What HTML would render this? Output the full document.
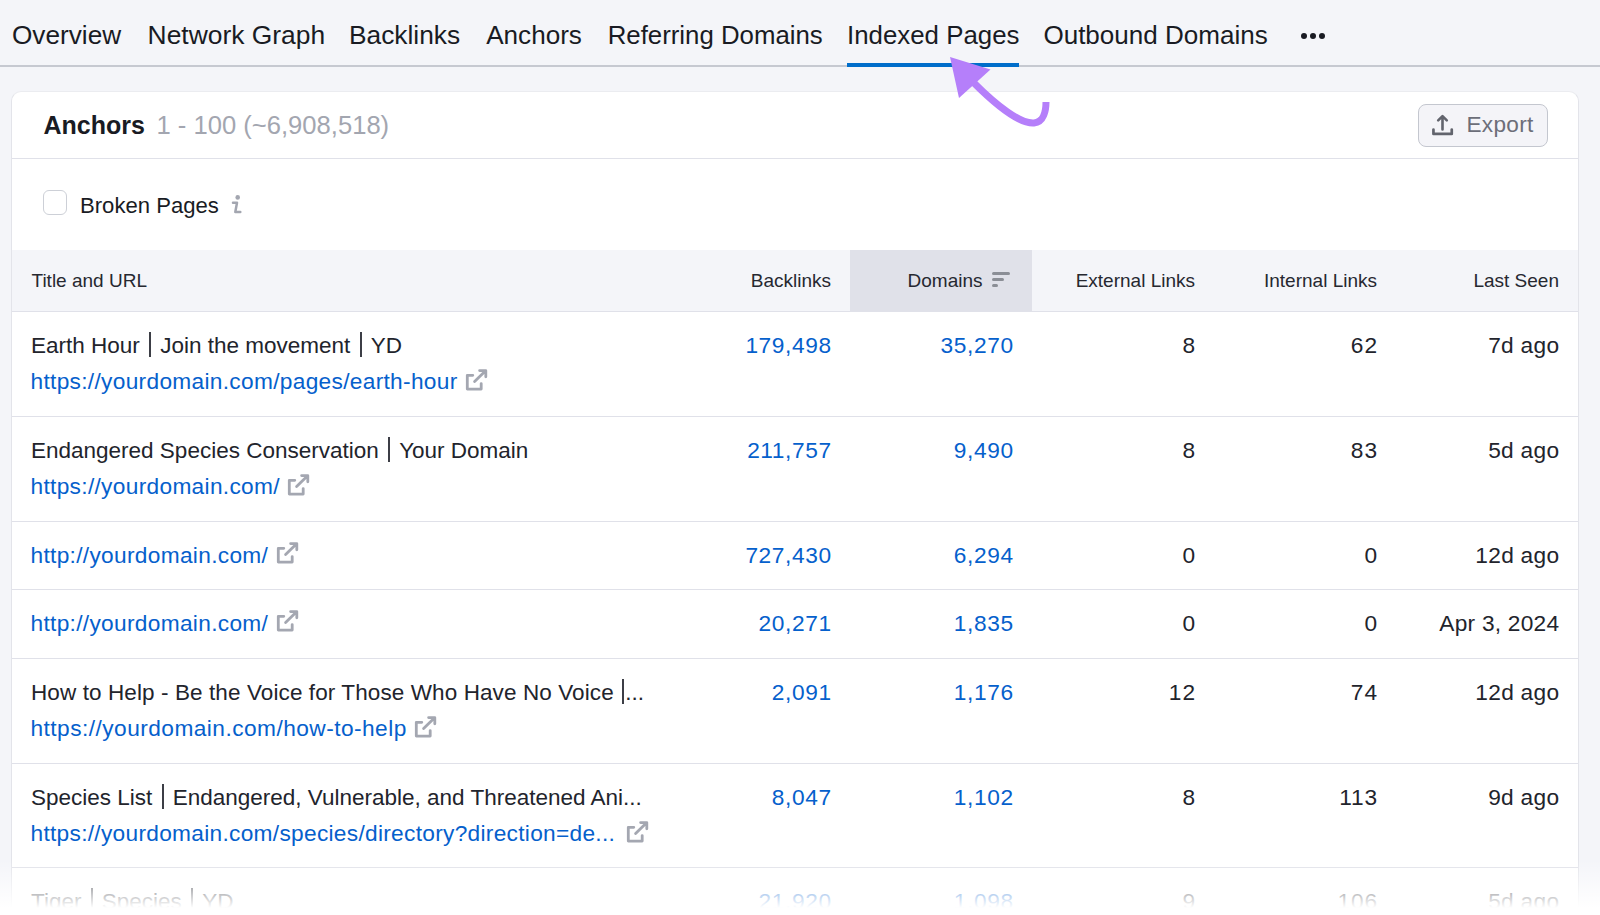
<!DOCTYPE html>
<html><head><meta charset="utf-8">
<style>
*{margin:0;padding:0;box-sizing:border-box;}
html,body{width:1600px;height:915px;overflow:hidden;background:#f4f5f9;font-family:"Liberation Sans",sans-serif;}
.t{position:absolute;white-space:nowrap;line-height:1;}
.abs{position:absolute;}
.pipe{display:inline-block;width:1.4px;height:1px;vertical-align:baseline;position:relative;}
.pipe::after{content:"";position:absolute;left:-0.3px;top:-19.3px;width:2px;height:25px;background:#3c3e46;}
</style></head><body>
<div class="t" style="left:12px;top:22.32px;font-size:26.2px;color:#191b23;font-weight:400;">Overview</div>
<div class="t" style="left:147.6px;top:22.15px;font-size:26.4px;color:#191b23;font-weight:400;">Network Graph</div>
<div class="t" style="left:349px;top:22.24px;font-size:26.3px;color:#191b23;font-weight:400;">Backlinks</div>
<div class="t" style="left:486.2px;top:22.41px;font-size:26.1px;color:#191b23;font-weight:400;">Anchors</div>
<div class="t" style="left:607.7px;top:22.66px;font-size:25.8px;color:#191b23;font-weight:400;">Referring Domains</div>
<div class="t" style="left:847px;top:22.62px;font-size:25.85px;color:#191b23;font-weight:400;">Indexed Pages</div>
<div class="t" style="left:1043.4px;top:22.45px;font-size:26.05px;color:#191b23;font-weight:400;">Outbound Domains</div>
<div class="abs" style="left:1301px;top:32.8px;width:6px;height:6px;border-radius:50%;background:#191b23"></div>
<div class="abs" style="left:1310.2px;top:32.8px;width:6px;height:6px;border-radius:50%;background:#191b23"></div>
<div class="abs" style="left:1319.4px;top:32.8px;width:6px;height:6px;border-radius:50%;background:#191b23"></div>
<div class="abs" style="left:0;top:65.4px;width:1600px;height:2px;background:#c6c9d1"></div>
<div class="abs" style="left:847px;top:63px;width:172px;height:4px;background:#006dca"></div>
<div class="abs" style="left:11px;top:91px;width:1568px;height:900px;background:#fff;border:1px solid #e3e4ea;border-top-color:#ebecf0;border-radius:10px;"></div>
<div class="t" style="left:43.5px;top:113.34px;font-size:25px;color:#191b23;font-weight:700;">Anchors</div>
<div class="t" style="left:156.5px;top:112.83px;font-size:25.6px;color:#a3a6b0;font-weight:400;">1 - 100 (~6,908,518)</div>
<div class="abs" style="left:1418px;top:104px;width:130px;height:43px;background:#f4f4f8;border:1px solid #c4c7cf;border-radius:8px;"></div>
<svg class="abs" style="left:1425px;top:108px" width="35" height="34" viewBox="0 0 35 34"><path d="M13.2 12.4 L17.5 8.1 L21.8 12.4 M17.5 8.6 V21.4" stroke="#62646d" stroke-width="2.6" fill="none" stroke-linecap="round" stroke-linejoin="round"/><path d="M8.45 21.6 V25.95 H26.75 V21.6" stroke="#62646d" stroke-width="2.7" fill="none" stroke-linecap="round" stroke-linejoin="round"/></svg>
<div class="t" style="left:1466.5px;top:114.37px;font-size:22.6px;color:#6c6e79;font-weight:400;letter-spacing:0.300px;">Export</div>
<div class="abs" style="left:12px;top:157.5px;width:1566px;height:1px;background:#e0e1e9"></div>
<div class="abs" style="left:43px;top:190px;width:24px;height:25px;border:1px solid #cdd0d7;border-radius:6px;background:#fff"></div>
<div class="t" style="left:80px;top:194.89px;font-size:22.1px;color:#191b23;font-weight:400;">Broken Pages</div>
<svg class="abs" style="left:222px;top:188px" width="30" height="32" viewBox="0 0 30 32"><circle cx="15.7" cy="9.4" r="2.3" fill="#a3a6b0"/><path d="M11 14.8 H15 L13.3 24 H18.3" stroke="#a3a6b0" stroke-width="2.5" fill="none" stroke-linecap="round" stroke-linejoin="round"/></svg>
<div class="abs" style="left:12px;top:250px;width:1566px;height:61px;background:#f4f5f9"></div>
<div class="abs" style="left:850px;top:250px;width:182px;height:61px;background:#e0e1e9"></div>
<div class="abs" style="left:12px;top:311px;width:1566px;height:1px;background:#e0e1e9"></div>
<div class="t" style="left:31.5px;top:270.72px;font-size:19px;color:#262830;font-weight:400;">Title and URL</div>
<div class="t" style="right:769.000px;text-align:right;top:270.72px;font-size:19px;color:#262830;font-weight:400;">Backlinks</div>
<div class="t" style="right:617.500px;text-align:right;top:270.72px;font-size:19px;color:#262830;font-weight:400;">Domains</div>
<svg class="abs" style="left:988px;top:268px" width="26" height="24" viewBox="0 0 26 24"><g stroke="#8b8e96" stroke-width="3" stroke-linecap="round"><line x1="5.5" y1="5.5" x2="20.5" y2="5.5"/><line x1="5.5" y1="11.5" x2="14.5" y2="11.5"/><line x1="5.5" y1="17.5" x2="8.5" y2="17.5"/></g></svg>
<div class="t" style="right:405.000px;text-align:right;top:270.72px;font-size:19px;color:#262830;font-weight:400;">External Links</div>
<div class="t" style="right:223.000px;text-align:right;top:270.72px;font-size:19px;color:#262830;font-weight:400;">Internal Links</div>
<div class="t" style="right:41.000px;text-align:right;top:270.72px;font-size:19px;color:#262830;font-weight:400;">Last Seen</div>
<div class="abs" style="left:12px;top:416px;width:1566px;height:1px;background:#e0e1e9"></div>
<div class="t" style="left:31px;top:334.75px;font-size:22.5px;color:#22242c;font-weight:400;">Earth Hour<span class="pipe" style="margin:0 9.5px"></span>Join the movement<span class="pipe" style="margin:0 9.5px"></span>YD</div>
<div class="t" style="left:30.5px;top:370.18px;font-size:22.7px;color:#0560cc;font-weight:400;letter-spacing:0.312px;">https://yourdomain.com/pages/earth-hour<span style="position:relative;display:inline-block;width:32.5px;height:0"><svg style="position:absolute;left:6.5px;top:-21.3px" width="26" height="26" viewBox="0 0 26 26"><path d="M8.8 7.3 H3.3 V21.1 H17.2 V15.6" stroke="#a4a7b1" stroke-width="2.8" fill="none" stroke-linecap="round" stroke-linejoin="round"/><path d="M10.6 13.6 L21.6 2.8 M15.6 2.6 H21.8 V8.8" stroke="#a4a7b1" stroke-width="2.8" fill="none" stroke-linecap="round" stroke-linejoin="round"/></svg></span></div>
<div class="t" style="right:768.398px;text-align:right;top:333.68px;font-size:22.7px;color:#0560cc;font-weight:400;letter-spacing:0.602px;">179,498</div>
<div class="t" style="right:586.389px;text-align:right;top:333.68px;font-size:22.7px;color:#0560cc;font-weight:400;letter-spacing:0.611px;">35,270</div>
<div class="t" style="right:405.000px;text-align:right;top:333.68px;font-size:22.7px;color:#22242c;font-weight:400;">8</div>
<div class="t" style="right:221.889px;text-align:right;top:333.68px;font-size:22.7px;color:#22242c;font-weight:400;letter-spacing:1.111px;">62</div>
<div class="t" style="right:40.722px;text-align:right;top:333.68px;font-size:22.7px;color:#22242c;font-weight:400;letter-spacing:0.278px;">7d ago</div>
<div class="abs" style="left:12px;top:521px;width:1566px;height:1px;background:#e0e1e9"></div>
<div class="t" style="left:31px;top:439.75px;font-size:22.5px;color:#22242c;font-weight:400;">Endangered Species Conservation<span class="pipe" style="margin:0 9.5px"></span>Your Domain</div>
<div class="t" style="left:30.5px;top:475.18px;font-size:22.7px;color:#0560cc;font-weight:400;letter-spacing:0.315px;">https://yourdomain.com/<span style="position:relative;display:inline-block;width:32.5px;height:0"><svg style="position:absolute;left:6.5px;top:-21.3px" width="26" height="26" viewBox="0 0 26 26"><path d="M8.8 7.3 H3.3 V21.1 H17.2 V15.6" stroke="#a4a7b1" stroke-width="2.8" fill="none" stroke-linecap="round" stroke-linejoin="round"/><path d="M10.6 13.6 L21.6 2.8 M15.6 2.6 H21.8 V8.8" stroke="#a4a7b1" stroke-width="2.8" fill="none" stroke-linecap="round" stroke-linejoin="round"/></svg></span></div>
<div class="t" style="right:768.411px;text-align:right;top:438.68px;font-size:22.7px;color:#0560cc;font-weight:400;letter-spacing:0.589px;">211,757</div>
<div class="t" style="right:586.375px;text-align:right;top:438.68px;font-size:22.7px;color:#0560cc;font-weight:400;letter-spacing:0.625px;">9,490</div>
<div class="t" style="right:405.000px;text-align:right;top:438.68px;font-size:22.7px;color:#22242c;font-weight:400;">8</div>
<div class="t" style="right:221.889px;text-align:right;top:438.68px;font-size:22.7px;color:#22242c;font-weight:400;letter-spacing:1.111px;">83</div>
<div class="t" style="right:40.722px;text-align:right;top:438.68px;font-size:22.7px;color:#22242c;font-weight:400;letter-spacing:0.278px;">5d ago</div>
<div class="abs" style="left:12px;top:589px;width:1566px;height:1px;background:#e0e1e9"></div>
<div class="t" style="left:30.5px;top:543.78px;font-size:22.7px;color:#0560cc;font-weight:400;letter-spacing:0.314px;">http://yourdomain.com/<span style="position:relative;display:inline-block;width:32.5px;height:0"><svg style="position:absolute;left:6.5px;top:-21.3px" width="26" height="26" viewBox="0 0 26 26"><path d="M8.8 7.3 H3.3 V21.1 H17.2 V15.6" stroke="#a4a7b1" stroke-width="2.8" fill="none" stroke-linecap="round" stroke-linejoin="round"/><path d="M10.6 13.6 L21.6 2.8 M15.6 2.6 H21.8 V8.8" stroke="#a4a7b1" stroke-width="2.8" fill="none" stroke-linecap="round" stroke-linejoin="round"/></svg></span></div>
<div class="t" style="right:768.398px;text-align:right;top:543.68px;font-size:22.7px;color:#0560cc;font-weight:400;letter-spacing:0.602px;">727,430</div>
<div class="t" style="right:586.375px;text-align:right;top:543.68px;font-size:22.7px;color:#0560cc;font-weight:400;letter-spacing:0.625px;">6,294</div>
<div class="t" style="right:405.000px;text-align:right;top:543.68px;font-size:22.7px;color:#22242c;font-weight:400;">0</div>
<div class="t" style="right:223.000px;text-align:right;top:543.68px;font-size:22.7px;color:#22242c;font-weight:400;">0</div>
<div class="t" style="right:40.726px;text-align:right;top:543.68px;font-size:22.7px;color:#22242c;font-weight:400;letter-spacing:0.274px;">12d ago</div>
<div class="abs" style="left:12px;top:658px;width:1566px;height:1px;background:#e0e1e9"></div>
<div class="t" style="left:30.5px;top:611.78px;font-size:22.7px;color:#0560cc;font-weight:400;letter-spacing:0.314px;">http://yourdomain.com/<span style="position:relative;display:inline-block;width:32.5px;height:0"><svg style="position:absolute;left:6.5px;top:-21.3px" width="26" height="26" viewBox="0 0 26 26"><path d="M8.8 7.3 H3.3 V21.1 H17.2 V15.6" stroke="#a4a7b1" stroke-width="2.8" fill="none" stroke-linecap="round" stroke-linejoin="round"/><path d="M10.6 13.6 L21.6 2.8 M15.6 2.6 H21.8 V8.8" stroke="#a4a7b1" stroke-width="2.8" fill="none" stroke-linecap="round" stroke-linejoin="round"/></svg></span></div>
<div class="t" style="right:768.389px;text-align:right;top:611.68px;font-size:22.7px;color:#0560cc;font-weight:400;letter-spacing:0.611px;">20,271</div>
<div class="t" style="right:586.375px;text-align:right;top:611.68px;font-size:22.7px;color:#0560cc;font-weight:400;letter-spacing:0.625px;">1,835</div>
<div class="t" style="right:405.000px;text-align:right;top:611.68px;font-size:22.7px;color:#22242c;font-weight:400;">0</div>
<div class="t" style="right:223.000px;text-align:right;top:611.68px;font-size:22.7px;color:#22242c;font-weight:400;">0</div>
<div class="t" style="right:40.765px;text-align:right;top:611.68px;font-size:22.7px;color:#22242c;font-weight:400;letter-spacing:0.235px;">Apr 3, 2024</div>
<div class="abs" style="left:12px;top:763px;width:1566px;height:1px;background:#e0e1e9"></div>
<div class="t" style="left:31px;top:681.75px;font-size:22.5px;color:#22242c;font-weight:400;letter-spacing:0.100px;">How to Help - Be the Voice for Those Who Have No Voice<span class="pipe" style="margin:0 1px 0 9px"></span>...</div>
<div class="t" style="left:30.5px;top:717.18px;font-size:22.7px;color:#0560cc;font-weight:400;letter-spacing:0.459px;">https://yourdomain.com/how-to-help<span style="position:relative;display:inline-block;width:32.5px;height:0"><svg style="position:absolute;left:6.5px;top:-21.3px" width="26" height="26" viewBox="0 0 26 26"><path d="M8.8 7.3 H3.3 V21.1 H17.2 V15.6" stroke="#a4a7b1" stroke-width="2.8" fill="none" stroke-linecap="round" stroke-linejoin="round"/><path d="M10.6 13.6 L21.6 2.8 M15.6 2.6 H21.8 V8.8" stroke="#a4a7b1" stroke-width="2.8" fill="none" stroke-linecap="round" stroke-linejoin="round"/></svg></span></div>
<div class="t" style="right:768.375px;text-align:right;top:680.68px;font-size:22.7px;color:#0560cc;font-weight:400;letter-spacing:0.625px;">2,091</div>
<div class="t" style="right:586.375px;text-align:right;top:680.68px;font-size:22.7px;color:#0560cc;font-weight:400;letter-spacing:0.625px;">1,176</div>
<div class="t" style="right:403.889px;text-align:right;top:680.68px;font-size:22.7px;color:#22242c;font-weight:400;letter-spacing:1.111px;">12</div>
<div class="t" style="right:221.889px;text-align:right;top:680.68px;font-size:22.7px;color:#22242c;font-weight:400;letter-spacing:1.111px;">74</div>
<div class="t" style="right:40.726px;text-align:right;top:680.68px;font-size:22.7px;color:#22242c;font-weight:400;letter-spacing:0.274px;">12d ago</div>
<div class="abs" style="left:12px;top:867px;width:1566px;height:1px;background:#e0e1e9"></div>
<div class="t" style="left:31px;top:786.75px;font-size:22.5px;color:#22242c;font-weight:400;">Species List<span class="pipe" style="margin:0 9.5px"></span>Endangered, Vulnerable, and Threatened Ani...</div>
<div class="t" style="left:30.5px;top:822.18px;font-size:22.7px;color:#0560cc;font-weight:400;letter-spacing:0.296px;">https://yourdomain.com/species/directory?direction=de...<span style="position:relative;display:inline-block;width:36px;height:0"><svg style="position:absolute;left:10px;top:-21.3px" width="26" height="26" viewBox="0 0 26 26"><path d="M8.8 7.3 H3.3 V21.1 H17.2 V15.6" stroke="#a4a7b1" stroke-width="2.8" fill="none" stroke-linecap="round" stroke-linejoin="round"/><path d="M10.6 13.6 L21.6 2.8 M15.6 2.6 H21.8 V8.8" stroke="#a4a7b1" stroke-width="2.8" fill="none" stroke-linecap="round" stroke-linejoin="round"/></svg></span></div>
<div class="t" style="right:768.375px;text-align:right;top:785.68px;font-size:22.7px;color:#0560cc;font-weight:400;letter-spacing:0.625px;">8,047</div>
<div class="t" style="right:586.375px;text-align:right;top:785.68px;font-size:22.7px;color:#0560cc;font-weight:400;letter-spacing:0.625px;">1,102</div>
<div class="t" style="right:405.000px;text-align:right;top:785.68px;font-size:22.7px;color:#22242c;font-weight:400;">8</div>
<div class="t" style="right:222.204px;text-align:right;top:785.68px;font-size:22.7px;color:#22242c;font-weight:400;letter-spacing:0.796px;">113</div>
<div class="t" style="right:40.722px;text-align:right;top:785.68px;font-size:22.7px;color:#22242c;font-weight:400;letter-spacing:0.278px;">9d ago</div>
<div class="abs" style="left:12px;top:972px;width:1566px;height:1px;background:#e0e1e9"></div>
<div class="t" style="left:31px;top:890.75px;font-size:22.5px;color:#22242c;font-weight:400;">Tiger<span class="pipe" style="margin:0 9.5px"></span>Species<span class="pipe" style="margin:0 9.5px"></span>YD</div>
<div class="t" style="right:768.389px;text-align:right;top:889.68px;font-size:22.7px;color:#0560cc;font-weight:400;letter-spacing:0.611px;">21,920</div>
<div class="t" style="right:586.375px;text-align:right;top:889.68px;font-size:22.7px;color:#0560cc;font-weight:400;letter-spacing:0.625px;">1,098</div>
<div class="t" style="right:405.000px;text-align:right;top:889.68px;font-size:22.7px;color:#22242c;font-weight:400;">9</div>
<div class="t" style="right:222.167px;text-align:right;top:889.68px;font-size:22.7px;color:#22242c;font-weight:400;letter-spacing:0.833px;">106</div>
<div class="t" style="right:40.722px;text-align:right;top:889.68px;font-size:22.7px;color:#22242c;font-weight:400;letter-spacing:0.278px;">5d ago</div>
<div class="abs" style="left:0;top:860px;width:1600px;height:55px;background:linear-gradient(to bottom,rgba(255,255,255,0),rgba(255,255,255,1) 87%)"></div>
<svg class="abs" style="left:0;top:0" width="1600" height="200" viewBox="0 0 1600 200">
<path d="M974 83 C996 105 1020 124 1034 123 C1044 122 1046 110 1046 102" stroke="#b57ffa" stroke-width="7" fill="none"/>
<path d="M950 57 L990.5 69.5 L959 98 Z" fill="#b57ffa"/>
</svg>
</body></html>
